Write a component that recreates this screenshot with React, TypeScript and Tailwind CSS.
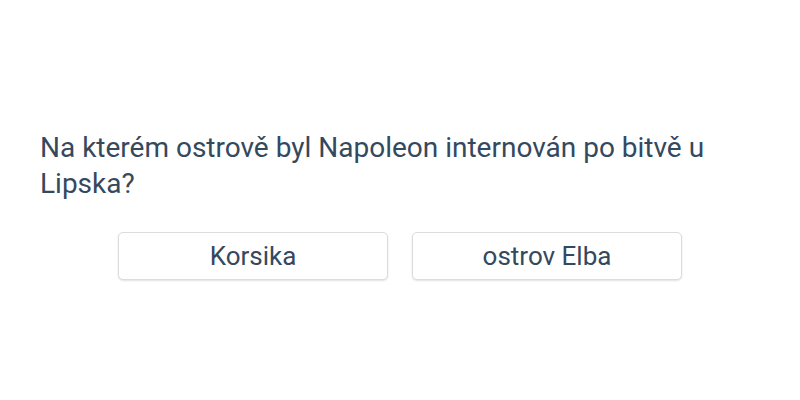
export default function App() {
  const answers = ["Korsika", "ostrov Elba"];
  return (
    <div className="h-[400px] w-full bg-white flex flex-col justify-center px-10 pt-[10px] font-['Roboto',sans-serif] text-[#34495e]">
      <p className="text-[28px] leading-[36px]">
        Na kterém ostrově byl Napoleon internován po bitvě u Lipska?
      </p>
      <div className="flex justify-center gap-[24px] mt-[30px]">
        {answers.map((a) => (
          <button
            key={a}
            className="w-[270px] h-[48px] rounded-[5px] border border-[#dcdcdc] bg-white text-[26px] text-[#34495e] shadow-[0_1px_2px_rgba(0,0,0,0.12)]"
          >
            {a}
          </button>
        ))}
      </div>
    </div>
  );
}
